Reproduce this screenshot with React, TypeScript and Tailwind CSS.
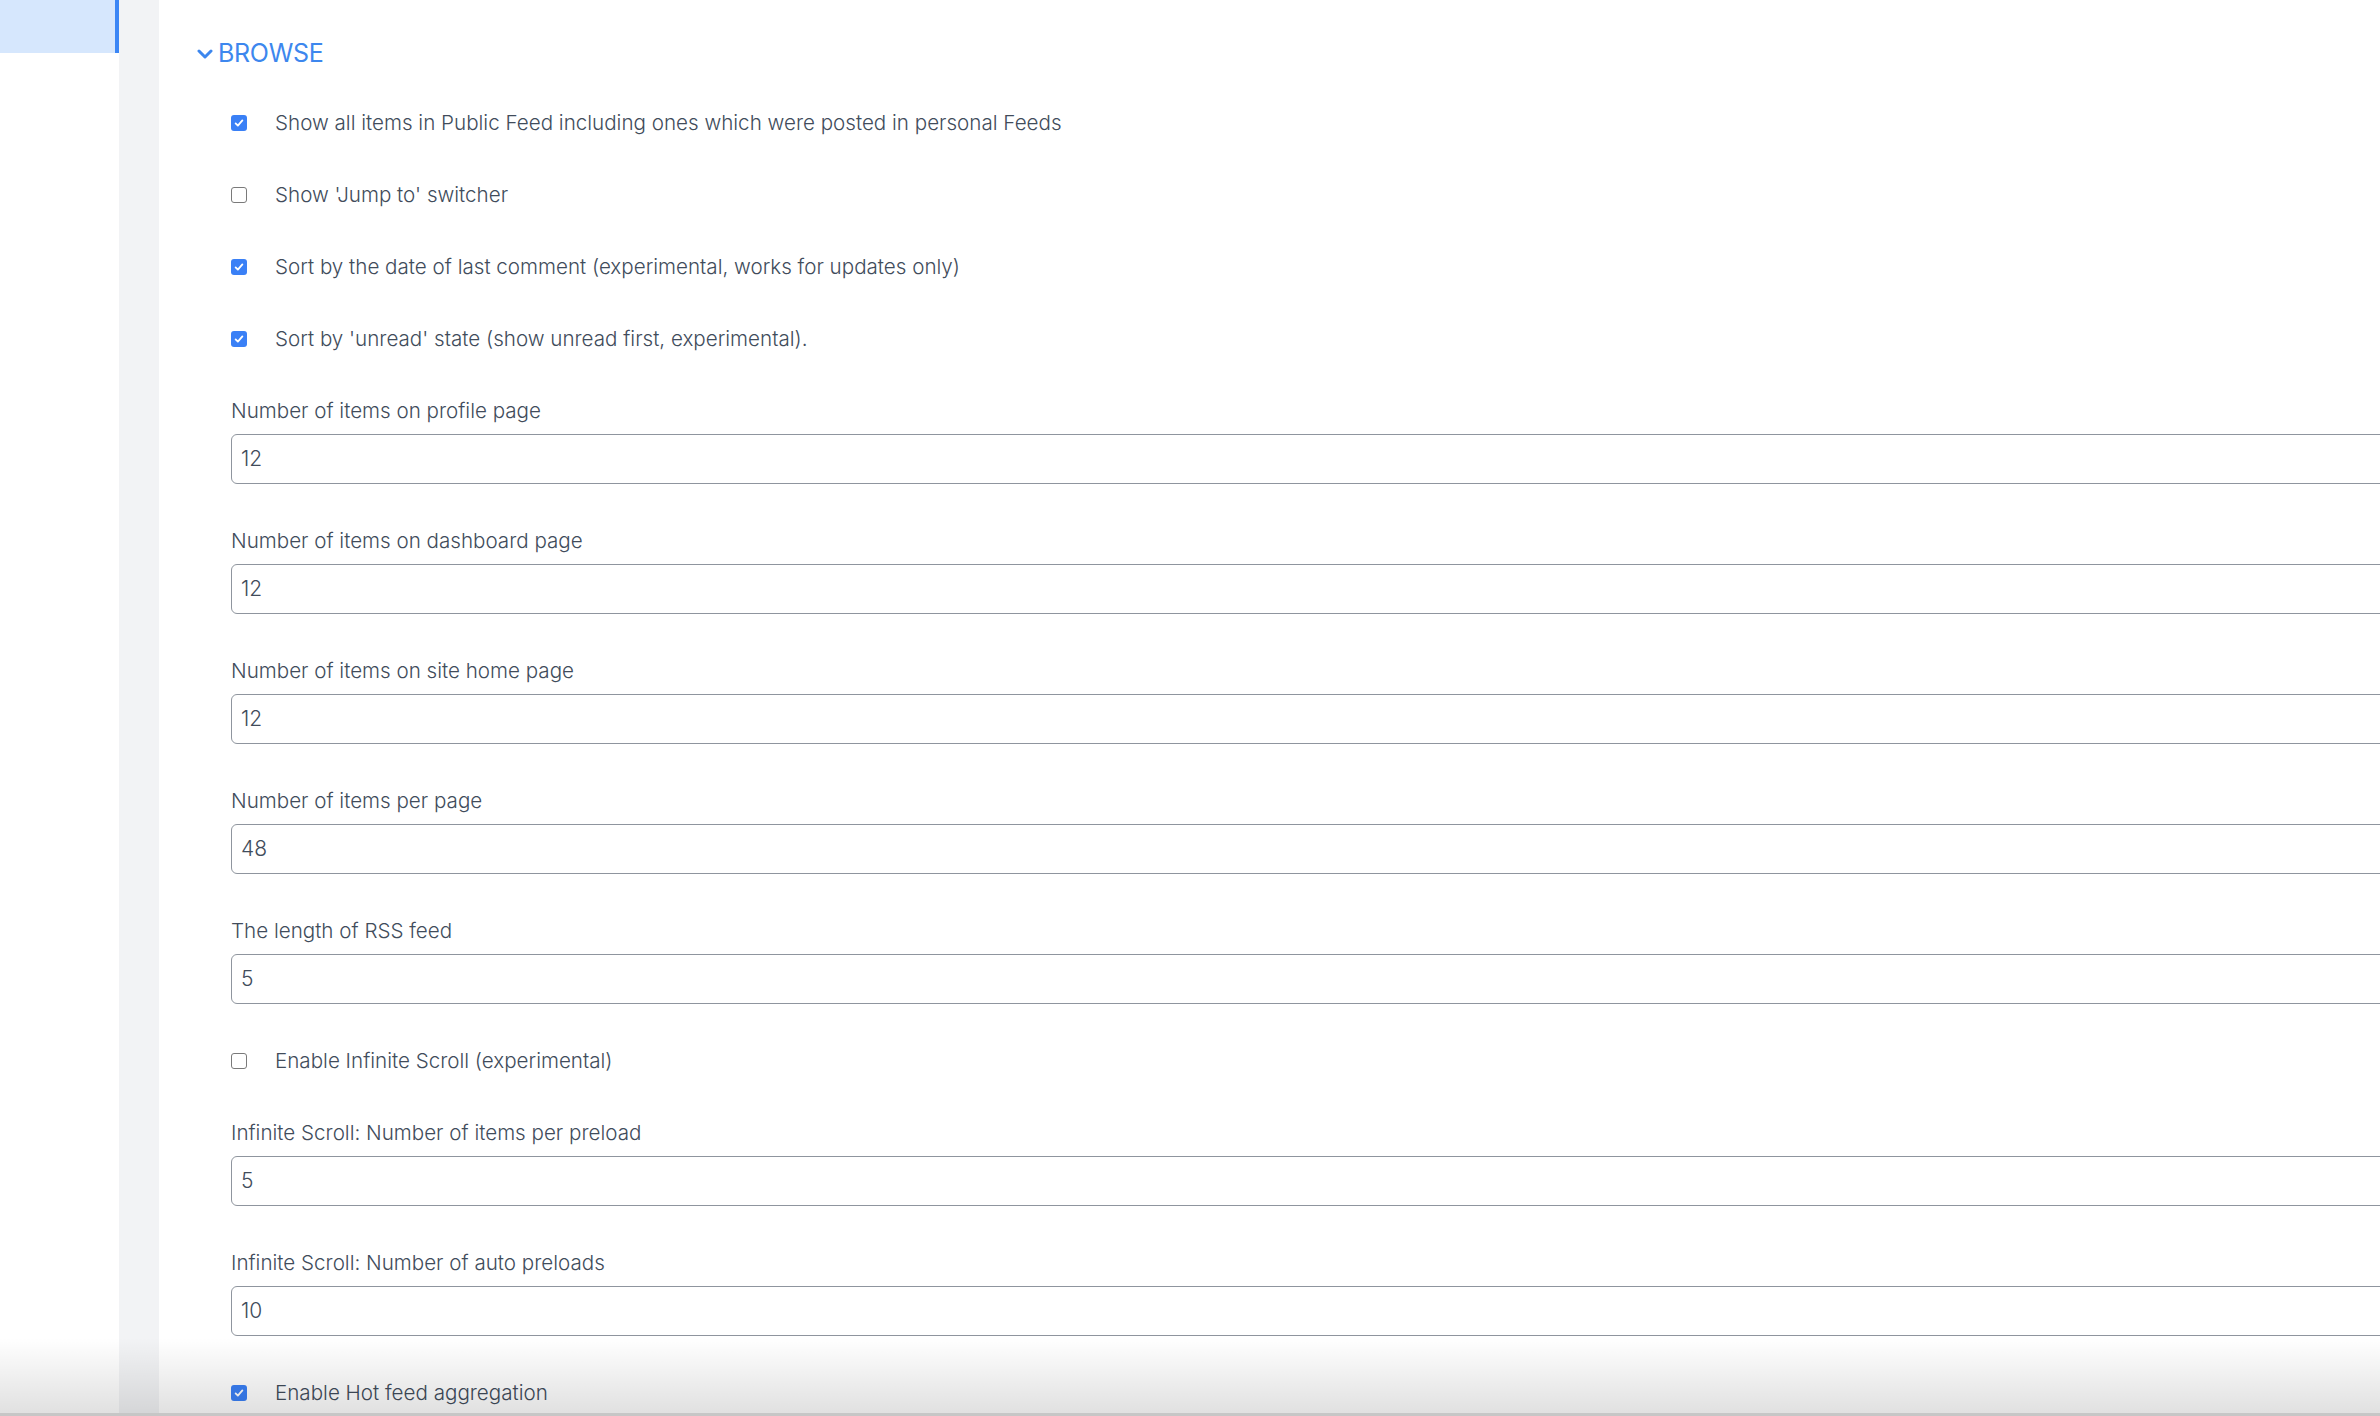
import React from 'react';

type Row =
    | { kind: 'check'; label: string; checked: boolean }
    | { kind: 'field'; label: string; value: string };

const rows: Row[] = [
    { kind: 'check', label: 'Show all items in Public Feed including ones which were posted in personal Feeds', checked: true },
    { kind: 'check', label: "Show 'Jump to' switcher", checked: false },
    { kind: 'check', label: 'Sort by the date of last comment (experimental, works for updates only)', checked: true },
    { kind: 'check', label: "Sort by 'unread' state (show unread first, experimental).", checked: true },
    { kind: 'field', label: 'Number of items on profile page', value: '12' },
    { kind: 'field', label: 'Number of items on dashboard page', value: '12' },
    { kind: 'field', label: 'Number of items on site home page', value: '12' },
    { kind: 'field', label: 'Number of items per page', value: '48' },
    { kind: 'field', label: 'The length of RSS feed', value: '5' },
    { kind: 'check', label: 'Enable Infinite Scroll (experimental)', checked: false },
    { kind: 'field', label: 'Infinite Scroll: Number of items per preload', value: '5' },
    { kind: 'field', label: 'Infinite Scroll: Number of auto preloads', value: '10' },
    { kind: 'check', label: 'Enable Hot feed aggregation', checked: true },
];

function CheckBox({ checked }: { checked: boolean }) {
    if (!checked) {
        return <span className="block w-4 h-4 rounded-[3px] border-[1.5px] border-[#7a7a7a] bg-white shrink-0" />;
    }
    return (
        <span className="flex items-center justify-center w-4 h-4 rounded-[3px] bg-[#3a80f6] shrink-0">
            <svg viewBox="0 0 16 16" className="w-3 h-3">
                <polyline points="3.5,8.5 6.5,11.5 12.5,4.5" fill="none" stroke="white" strokeWidth="2.4" strokeLinecap="round" strokeLinejoin="round" />
            </svg>
        </span>
    );
}

export default function App() {
    return (
        <div
            className="relative flex h-screen w-full overflow-hidden bg-white text-[#414c5b]"
            style={{ fontFamily: 'Inter, "Liberation Sans", sans-serif' }}
        >
            {/* sidebar */}
            <div className="w-[119px] shrink-0 bg-white">
                <div className="h-[53px] bg-[#d6e7fd] border-r-4 border-[#3b86f5]" />
            </div>
            <div className="w-[40px] shrink-0 bg-[#f2f3f5]" />

            {/* content */}
            <div className="flex-1 min-w-0 pl-[38px]">
                <div className="flex items-center h-[36px] mt-[36px] text-[#3d87ee]">
                    <svg viewBox="0 0 16 10" className="w-[16px] h-[10px] mr-[5px]">
                        <polyline points="2,2 8,8 14,2" fill="none" stroke="currentColor" strokeWidth="3" strokeLinecap="round" strokeLinejoin="round" />
                    </svg>
                    <span className="text-[25px] tracking-[-0.3px]">BROWSE</span>
                </div>

                <div className="pl-[34px] mt-[36px] text-[20.6px] font-[350]">
                    {rows.map((row, i) =>
                        row.kind === 'check' ? (
                            <div key={i} className="flex items-center h-[30px] mb-[42px]">
                                <CheckBox checked={row.checked} />
                                <span className="ml-[28px] leading-[30px]">{row.label}</span>
                            </div>
                        ) : (
                            <div key={i} className="mb-[42px]">
                                <div className="h-[30px] leading-[30px]">{row.label}</div>
                                <div className="mt-[8px] h-[50px] w-[2400px] rounded-[6px] border-[1.5px] border-[#8f959e] bg-white flex items-center pl-[9px] text-[21px]">
                                    {row.value}
                                </div>
                            </div>
                        )
                    )}
                </div>
            </div>

            {/* bottom shade */}
            <div className="pointer-events-none absolute left-0 right-0 bottom-0 h-[78px] bg-gradient-to-b from-transparent to-black/[0.12] border-b-[3px] border-[#c6c6c6]" />
        </div>
    );
}
